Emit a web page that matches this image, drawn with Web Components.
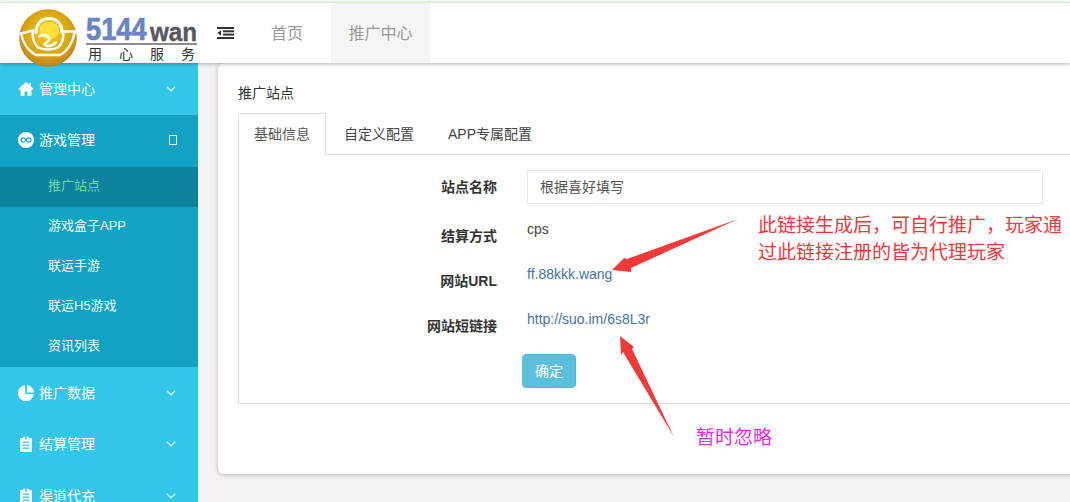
<!DOCTYPE html>
<html lang="zh">
<head>
<meta charset="utf-8">
<title>推广站点</title>
<style>
  html, body { margin: 0; padding: 0; height: 100%; overflow: hidden; background: #f3f3f4; }
  body { font: 14px/20px "Liberation Sans", "Noto Sans CJK SC", sans-serif; color: #333; }
</style>
</head>
<body>
<admin-shell>
  <top-bar slot="top">
    <nav-tab>首页</nav-tab>
    <nav-tab active>推广中心</nav-tab>
  </top-bar>
  <side-menu slot="side">
    <menu-group icon="home" label="管理中心" low></menu-group>
    <menu-group icon="infinity" label="游戏管理" open>
      <sub-item active>推广站点</sub-item>
      <sub-item>游戏盒子APP</sub-item>
      <sub-item>联运手游</sub-item>
      <sub-item>联运H5游戏</sub-item>
      <sub-item>资讯列表</sub-item>
    </menu-group>
    <menu-group icon="pie" label="推广数据" low></menu-group>
    <menu-group icon="clipboard" label="结算管理"></menu-group>
    <menu-group icon="clipboard" label="渠道代充"></menu-group>
  </side-menu>
  <site-card heading="推广站点">
    <tab-strip>
      <tab-item active>基础信息</tab-item>
      <tab-item>自定义配置</tab-item>
      <tab-item>APP专属配置</tab-item>
    </tab-strip>
    <form-panel>
      <form-row label="站点名称" first><text-box>根据喜好填写</text-box></form-row>
      <form-row label="结算方式">cps</form-row>
      <form-row label="网站URL"><a href="#">ff.88kkk.wang</a></form-row>
      <form-row label="网站短链接"><a href="#">http://suo.im/6s8L3r</a></form-row>
      <info-button>确定</info-button>
    </form-panel>
  </site-card>
</admin-shell>
<call-outs></call-outs>

<script>
  const FONT = '"Liberation Sans", "Noto Sans CJK SC", sans-serif'

  /**
   * Small helper, every element gets its open shadow root the same way.
   */
  class ShadowElement extends HTMLElement {
    constructor () {
      super()
      this.attachShadow({ mode: 'open' })
    }

    render (html) {
      this.shadowRoot.innerHTML = html
    }
  }

  const ICONS = {
    home: '<path d="M8 1 .6 7.8c-.4.4-.1.9.4.9H2.600V15h3.900v-4.500h3V15h3.900V8.700H15c.5 0 .8-.5.4-.9L13 5.600V2h-2v1.800Z"/>',
    infinity: '<circle cx="8" cy="8" r="8"/><path d="M5.200 5.900a2.100 2.100 0 0 0 0 4.200c1.100 0 1.900-.8 2.800-2.100.9-1.300 1.700-2.100 2.800-2.100a2.100 2.100 0 0 1 0 4.200c-1.100 0-1.900-.8-2.800-2.100-.9-1.300-1.700-2.100-2.800-2.100Z" fill="none" stroke="#12a2c3" stroke-width="1.200"/>',
    pie: '<path d="M7.200.2A8 8 0 1 0 15.800 9H7.200Z"/><path d="M9 0v7.400h7A8 8 0 0 0 9 0Z"/>',
    clipboard: '<path fill-rule="evenodd" d="M2 2h3V.8h6V2h3v14H2Zm6 1.500a1.100 1.100 0 1 0 0-2.200 1.100 1.100 0 0 0 0 2.200ZM4.500 5.500v1.200h7V5.500Zm0 3v1.200h7V8.500Zm0 3v1.200h7v-1.200Z"/>'
  }

  customElements.define('admin-shell', class extends ShadowElement {
    connectedCallback () {
      this.render(`
        <style>
          :host { display: grid; grid-template: 63px 439px / 198px 1fr; height: 502px; overflow: hidden; }
          .top { grid-column: 1 / 3; position: relative; z-index: 2; background: #fff; }
          .side { overflow: hidden; }
          .main { overflow: hidden; padding-left: 20px; }
        </style>
        <div class="top"><slot name="top"></slot></div>
        <div class="side"><slot name="side"></slot></div>
        <div class="main"><slot></slot></div>`)
    }
  })

  customElements.define('brand-logo', class extends ShadowElement {
    connectedCallback () {
      this.render(`
        <style>
          :host { display: flex; flex: none; width: 198px; height: 60px; box-sizing: border-box; padding-left: 19px; }
          svg { flex: none; width: 58px; height: 58px; margin: 6px 9px 0 0; overflow: visible; }
          .words { width: 111px; padding-top: 15px; }
          .name { display: flex; height: 25px; }
          .num, .wan { display: block; height: 24px; line-height: 24px; font-weight: 700; transform-origin: left top; white-space: nowrap; }
          .num { width: 61px; font-size: 31px; color: #6a84c4; transform: scaleX(.88); -webkit-text-stroke: .7px #6a84c4; }
          .wan { width: 47px; margin: 2px 0 0 3px; font-size: 26px; color: #56565f; transform: scaleX(.93); -webkit-text-stroke: .4px #56565f; }
          .rule { height: 2px; background: #8b8b96; }
          .motto { display: flex; justify-content: space-between; height: 15px; margin-top: 1px; padding: 0 2px;
            font: 14px/16px "Liberation Sans", "Noto Sans CJK SC", sans-serif; color: #333; }
        </style>
        <svg viewBox="19 7.500 58 58">
          <defs>
            <radialGradient id="gold" cx=".5" cy=".42" r=".62">
              <stop offset="0" stop-color="#f7c81f"/>
              <stop offset=".6" stop-color="#dba712"/>
              <stop offset="1" stop-color="#bb7a1e"/>
            </radialGradient>
          </defs>
          <circle cx="48" cy="36.500" r="28.800" fill="url(#gold)"/>
          <ellipse cx="49" cy="29" rx="10" ry="9" fill="#ffdf3a"/>
          <g fill="none" stroke="#fff" stroke-linejoin="round" stroke-linecap="round">
            <path stroke-width="2.400" d="M21 32 33 29C32 36 33 41 38 46Q48 50 58 46C63 41 64 36 63 30L75 30C73 41 67 50 60 53.500H36C29 50 23 42 21 32Z"/>
            <path stroke-width="3.200" d="M36 31C36 22 42 17 49 17S62 22 62 31"/>
            <path stroke-width="2.600" d="M39 35C44 32 50 35 49 38.500S43 41 45 43.500 53 44 56 41"/>
          </g>
        </svg>
        <div class="words">
          <div class="name"><span class="num">5144</span><span class="wan">wan</span></div>
          <div class="rule"></div>
          <div class="motto"><span>用</span><span>心</span><span>服</span><span>务</span></div>
        </div>`)
    }
  })

  customElements.define('top-bar', class extends ShadowElement {
    connectedCallback () {
      this.render(`
        <style>
          :host { display: flex; height: 60px; border-top: 1px solid #d8ecd0; margin-top: 2px; background: #fff;
            box-shadow: 0 1px 4px rgba(0, 0, 0, .3); }
          .toggle { flex: none; width: 55px; display: flex; align-items: center; padding-left: 19px; box-sizing: border-box; }
          .tabs { display: flex; height: 60px; }
        </style>
        <brand-logo></brand-logo>
        <div class="toggle">
          <svg width="17" height="12" viewBox="0 0 17 12" fill="#333">
            <rect x="0" y="0" width="17" height="2"/>
            <rect x="6" y="3.300" width="11" height="2"/>
            <rect x="6" y="6.600" width="11" height="2"/>
            <rect x="0" y="10" width="17" height="2"/>
            <path d="M4 3.200v5.600L.4 6Z"/>
          </svg>
        </div>
        <div class="tabs"><slot></slot></div>`)
    }
  })

  customElements.define('nav-tab', class extends ShadowElement {
    connectedCallback () {
      this.render(`
        <style>
          :host { display: flex; align-items: center; padding: 1px 17.500px 0 18px; margin-right: 10px; font-size: 16px; color: #999; }
          :host([active]) { background: #f5f5f5; }
        </style>
        <slot></slot>`)
    }
  })

  customElements.define('side-menu', class extends ShadowElement {
    connectedCallback () {
      this.render(`
        <style>
          :host { display: block; background: #33c6e9; color: #fff; height: 100%; }
        </style>
        <slot></slot>`)
    }
  })

  customElements.define('menu-group', class extends ShadowElement {
    connectedCallback () {
      const open = this.hasAttribute('open')
      const marker = open
        ? '<span class="box"></span>'
        : '<svg class="chev" width="10" height="6" viewBox="0 0 10 6"><path d="M.8.8 5 4.800 9.200.8" fill="none" stroke="#fff" stroke-opacity=".8" stroke-width="1.300"/></svg>'
      this.render(`
        <style>
          :host { display: block; }
          .row { display: flex; align-items: center; height: 52px; box-sizing: border-box; padding: 0 0 2px 18px; font-size: 14px; }
          :host([low]) .row { padding-bottom: 0; }
          :host([open]) { background: #12a2c3; }
          svg.icon { flex: none; width: 16px; height: 16px; margin-right: 5px; fill: #fff; }
          .label { flex: 1; }
          .chev { margin-right: 22px; }
          .box { width: 6px; height: 8px; border: 1px solid #fff; margin-right: 21px; }
        </style>
        <div class="row">
          <svg class="icon" viewBox="0 0 16 16">${ICONS[this.getAttribute('icon')]}</svg>
          <span class="label">${this.getAttribute('label')}</span>
          ${marker}
        </div>
        <slot></slot>`)
    }
  })

  customElements.define('sub-item', class extends ShadowElement {
    connectedCallback () {
      this.render(`
        <style>
          :host { display: flex; align-items: center; height: 40px; box-sizing: border-box; padding: 0 0 2px 48px; font-size: 13px; color: #f2fbfd; }
          :host([active]) { background: #0e819c; color: #70d8a8; }
        </style>
        <slot></slot>`)
    }
  })

  customElements.define('site-card', class extends ShadowElement {
    connectedCallback () {
      this.render(`
        <style>
          :host { display: block; width: 900px; box-sizing: border-box; padding: 20px 20px 70px; background: #fff;
            border-radius: 6px; box-shadow: 0 1px 5px rgba(0, 0, 0, .25); }
          h2 { margin: 0 0 10px; font-size: 14px; font-weight: 400; line-height: 20px; color: #333; }
        </style>
        <h2>${this.getAttribute('heading')}</h2>
        <slot></slot>`)
    }
  })

  customElements.define('tab-strip', class extends ShadowElement {
    connectedCallback () {
      this.render(`
        <style>
          :host { display: flex; border-bottom: 1px solid #ddd; height: 41px; }
        </style>
        <slot></slot>`)
    }
  })

  customElements.define('tab-item', class extends ShadowElement {
    connectedCallback () {
      this.render(`
        <style>
          :host { display: block; height: 42px; box-sizing: border-box; padding: 10px 15px; margin-right: 2px;
            border: 1px solid transparent; border-bottom: 0; border-radius: 2px 2px 0 0; color: #444; line-height: 20px; }
          :host([active]) { background: #fff; border-color: #ddd; color: #555; }
        </style>
        <slot></slot>`)
    }
  })

  customElements.define('form-panel', class extends ShadowElement {
    connectedCallback () {
      this.render(`
        <style>
          :host { display: block; border: 1px solid #ddd; border-top: 0; padding: 15px 0 15px; }
        </style>
        <slot></slot>`)
    }
  })

  customElements.define('form-row', class extends ShadowElement {
    connectedCallback () {
      this.render(`
        <style>
          :host { display: grid; grid-template-columns: 258px 1fr; column-gap: 30px; min-height: 34px; margin-bottom: 11px; }
          :host([first]) { margin-bottom: 15px; }
          label { text-align: right; font-weight: 700; padding-top: 7px; color: #333; }
          .value { color: #444; }
          ::slotted(a) { color: #4672a8; text-decoration: none; }
        </style>
        <label>${this.getAttribute('label')}</label>
        <div class="value"><slot></slot></div>`)
    }
  })

  customElements.define('text-box', class extends ShadowElement {
    connectedCallback () {
      this.render(`
        <style>
          :host { display: block; width: 516px; height: 34px; box-sizing: border-box; padding: 6px 12px;
            border: 1px solid #e5e6e7; background: #fff; color: #555; line-height: 20px; }
        </style>
        <slot></slot>`)
    }
  })

  customElements.define('info-button', class extends ShadowElement {
    connectedCallback () {
      this.render(`
        <style>
          :host { display: block; width: 54px; height: 34px; margin-left: 283px; box-sizing: border-box;
            background: #5bc0de; border: 1px solid #53bcdb; border-radius: 4px; color: #fff; text-align: center; line-height: 32px; }
        </style>
        <slot></slot>`)
    }
  })

  // red arrows and notes drawn on top of the screenshot
  customElements.define('call-outs', class extends ShadowElement {
    connectedCallback () {
      this.render(`
        <style>
          :host { position: absolute; inset: 0; pointer-events: none; font-family: ${FONT}; font-size: 19px; line-height: 27px; z-index: 5; }
          svg { position: absolute; left: 0; top: 0; }
          .note { position: absolute; left: 758px; top: 212px; width: 312px; color: #f0373c; }
          .aside { position: absolute; left: 696px; top: 424px; color: #e02fe0; }
        </style>
        <svg width="1070" height="502" fill="#f03a3a">
          <polygon points="738,219 627,259 624,258 612,270 631,272 631,268"/>
          <polygon points="620,336 634,347 632,349 674,437 623,352 621,355"/>
        </svg>
        <div class="note">此链接生成后，可自行推广，玩家通<br>过此链接注册的皆为代理玩家</div>
        <div class="aside">暂时忽略</div>`)
    }
  })
</script>
</body>
</html>
